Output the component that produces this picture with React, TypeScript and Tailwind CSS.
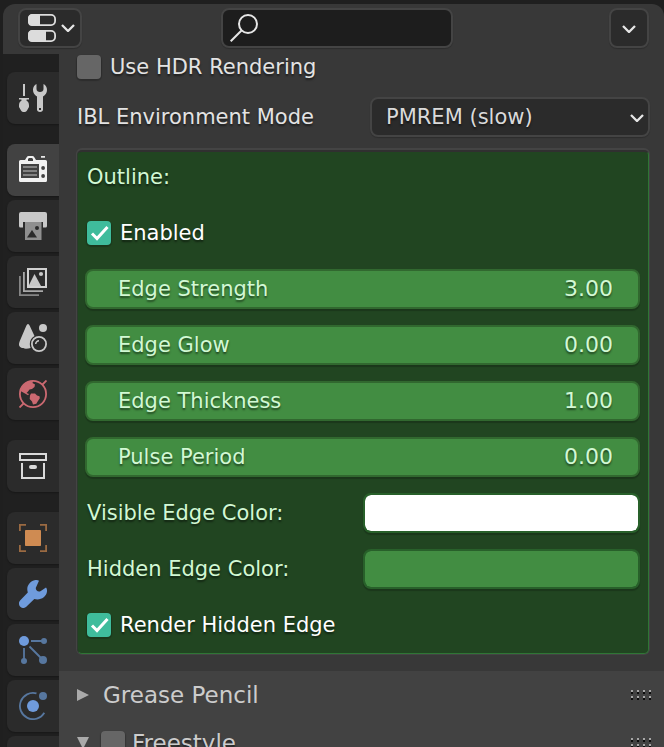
import React, { ReactNode, useState } from "react";

function Icon({ children }: { children: ReactNode }) {
  return (
    <svg viewBox="0 0 28 28" className="size-7 shrink-0" fill="none" aria-hidden="true">
      {children}
    </svg>
  );
}

function Chevron() {
  return (
    <svg viewBox="0 0 14 8" className="h-2 w-3.5 shrink-0" fill="none" stroke="#e6e6e6" strokeWidth="2.300" aria-hidden="true">
      <path d="M1 1 7 7 13 1" />
    </svg>
  );
}

const ToolIcon = (
  <Icon>
    <path fill="#c8c8c8" d="M4 0h2v12H4zM0 14h10v1.6H7.6V17H8c1.400.9 2 2.600 2 4.500V23l-2 3.500C7.300 27.700 6.200 28 5 28s-2.300-.3-3-1.500L0 23v-1.500C0 19.600.6 17.900 2 17h.4v-1.400H0z" />
    <path fill="#c8c8c8" fillRule="evenodd" d="M17.500 0v5c0 2 1.500 3 3.500 3s3.500-1 3.500-3V0C26.800 1.200 28 3.300 28 6c0 3-1.500 5-4 6.500V25.500c0 1.500-1.200 2.500-3 2.500s-3-1-3-2.500V12.500C15.500 11 14 9 14 6c0-2.700 1.200-4.800 3.500-6zM20 24v2h2v-2z" />
  </Icon>
);

const RenderIcon = (
  <Icon>
    <path fill="#f2f2f2" fillRule="evenodd" d="M1.500 4H6l2-3.200Q8.500 0 9.500 0h4q1 0 1.500.8L17 4h9.500Q28 4 28 5.500v19Q28 26 26.500 26h-25Q0 26 0 24.500v-19Q0 4 1.500 4zM9 3v2h5V3l-1-1h-3zM2 8v14h18V8zM22.200 12a1.900 1.900 0 1 0 3.800 0a1.900 1.900 0 1 0-3.800 0M22.200 20a1.900 1.900 0 1 0 3.800 0a1.900 1.900 0 1 0-3.800 0" />
    <path stroke="#999" strokeWidth="1.400" d="M4 11h14M4 15h14M4 19h14" />
    <path stroke="#e6e6e6" strokeWidth="1.600" d="M22 .9h4" />
  </Icon>
);

const OutputIcon = (
  <Icon>
    <path fill="#c8c8c8" d="M2 0h24q2 0 2 2v12q0 1.500-1.500 1.500H24V8H4v7.500H1.500Q0 15.500 0 14V2Q0 0 2 0z" />
    <path fill="#c8c8c8" d="M4 7h20v3H4z" />
    <path fill="#8f8f8f" d="M6 10h16.500v18H6z" />
    <path fill="#2b2b2b" d="m8 25.500 5-7.500 5 7.500z" />
    <circle cx="18" cy="16" r="2" fill="#2b2b2b" />
  </Icon>
);

const ViewLayerIcon = (
  <Icon>
    <path stroke="#858585" strokeWidth="1.800" d="M.9 8v19.100H20" />
    <path stroke="#a8a8a8" strokeWidth="1.800" d="M4.900 4v19.100H24" />
    <rect x="9" y="1" width="18" height="18" stroke="#d0d0d0" strokeWidth="2" />
    <path fill="#c8c8c8" d="M10 18v-1l5.500-11L22 18z" />
    <circle cx="22" cy="6" r="2.100" fill="#c8c8c8" />
  </Icon>
);

const SceneIcon = (
  <Icon>
    <path fill="#c8c8c8" d="M9 0Q10 0 10.700 1.800L15.500 12C12.500 13.500 10.800 16.500 10.800 20q0 2 .8 4Q9.500 24.700 7 24.700C3 24.700 0 23 0 20.500c0-1.500.5-2.500 1-4L7.300 1.800Q8 0 9 0z" />
    <circle cx="24" cy="4" r="4" fill="#c8c8c8" />
    <circle cx="20" cy="20" r="7.100" stroke="#c8c8c8" strokeWidth="1.800" />
    <path stroke="#c8c8c8" strokeWidth="1.500" d="M16.700 20a3.300 3.300 0 0 1 3.300-3.300" />
  </Icon>
);

const WorldIcon = (
  <Icon>
    <circle cx="14" cy="14" r="13.100" stroke="#cb6971" strokeWidth="1.800" />
    <path stroke="#cb6971" strokeWidth="1.800" d="m23.500 4.500 4-4M.5 27.500l4-4" />
    <path fill="#cb6971" d="M4 5.500Q8 1 14 1l-.5 2 2.500 1.500-.5 2.500L13 9l-2.500.5L9 11.500l-1.500 1.500L10 14l-1 1.200-3-1.700L1.500 11Q2 8 4 5.500z" />
    <path fill="#cb6971" d="M12 13.500h4l2 2 2.500.8.300 2-2 3-1.500 2.500-3.300.8-1-3-2.300-2.600.3-3.500z" />
  </Icon>
);

const CollectionIcon = (
  <Icon>
    <rect x="1" y="2" width="26" height="6" stroke="#dadada" strokeWidth="2" />
    <path stroke="#dadada" strokeWidth="2" d="M3 11v15h22V11" />
    <rect x="10" y="13" width="8" height="4" rx="2" fill="#dadada" />
  </Icon>
);

const ObjectIcon = (
  <Icon>
    <path stroke="#9a6a42" strokeWidth="1.800" d="M.9 7V.9H7M21 .9h6.100V7M27.100 21v6.100H21M7 27.100H.9V21" />
    <rect x="6" y="6" width="16" height="16" rx=".8" fill="#cf8b52" />
  </Icon>
);

const ModifierIcon = (
  <Icon>
    <path fill="#6f9bdc" d="M20 .8C19 .1 17.500-.2 15.500.3 10 1.800 7 7 8.800 12.600L1.300 20.200C-.6 22.100-.4 24.700 1 26.500c1.700 2 4.500 2 6.300.3l8-7.800c6 1.700 12-1.800 12.700-7.500.2-1.500-.2-3.200-1-4L21.800 11c-3 1.800-6.300-1.500-4.500-4.300z" />
  </Icon>
);

const ParticlesIcon = (
  <Icon>
    <path stroke="#57779f" strokeWidth="1.800" d="M12 5h11M5 12v11M10.500 10.500 22 22" />
    <circle cx="5" cy="5" r="5" fill="#6f9bdc" />
    <circle cx="25" cy="5" r="3" fill="#57779f" />
    <circle cx="5" cy="25" r="3" fill="#57779f" />
    <circle cx="24" cy="24" r="4" fill="#57779f" />
  </Icon>
);

const PhysicsIcon = (
  <Icon>
    <path stroke="#57779f" strokeWidth="1.800" d="M17.500 1.400A13.100 13.100 0 1 0 25.300 20.700" />
    <circle cx="14" cy="14" r="6" fill="#6f9bdc" />
    <circle cx="24" cy="4" r="4" fill="#57779f" />
  </Icon>
);

const tabGroups: { name: string; icon: ReactNode }[][] = [
  [{ name: "Tool", icon: ToolIcon }],
  [
    { name: "Render", icon: RenderIcon },
    { name: "Output", icon: OutputIcon },
    { name: "View Layer", icon: ViewLayerIcon },
    { name: "Scene", icon: SceneIcon },
    { name: "World", icon: WorldIcon },
  ],
  [{ name: "Collection", icon: CollectionIcon }],
  [
    { name: "Object", icon: ObjectIcon },
    { name: "Modifiers", icon: ModifierIcon },
    { name: "Particles", icon: ParticlesIcon },
    { name: "Physics", icon: PhysicsIcon },
    { name: "Constraints", icon: null },
  ],
];

function Checkbox({ id, checked = false }: { id: string; checked?: boolean }) {
  return (
    <span className="relative size-6 shrink-0">
      <input
        id={id}
        type="checkbox"
        defaultChecked={checked}
        className="peer block size-6 appearance-none rounded bg-[#666666] shadow-[0_1px_1px_1px_rgba(0,0,0,0.2)] checked:bg-[#3fbc9c]"
      />
      <svg viewBox="0 0 24 24" className="pointer-events-none absolute inset-0 hidden peer-checked:block" fill="none" stroke="#fff" strokeWidth="3" aria-hidden="true">
        <path d="m5 12.500 5 5L20.500 6" />
      </svg>
    </span>
  );
}

function NumberField({ id, label, value }: { id: string; label: string; value: string }) {
  return (
    <div className="flex h-10 items-center rounded-lg border-2 border-[#31682f] bg-[#428d42] pr-[25px] pl-[31px] text-[#d2f8d4] shadow-[0_2px_1px_rgba(0,0,0,0.2)]">
      <label htmlFor={id} className="grow whitespace-nowrap">{label}</label>
      <input id={id} defaultValue={value} inputMode="decimal" className="w-24 bg-transparent text-right text-[22px] outline-none [text-shadow:inherit]" />
    </div>
  );
}

function ColorField({ id, label, value }: { id: string; label: string; value: string }) {
  return (
    <div className="flex h-10 items-center">
      <label htmlFor={id} className="w-1/2 pl-0.5 whitespace-nowrap">{label}</label>
      <input
        id={id}
        type="color"
        defaultValue={value}
        className="h-10 w-1/2 appearance-none rounded-lg border-2 border-[#28602a] bg-[#28602a] p-0 shadow-[0_2px_1px_rgba(0,0,0,0.2)] [&::-webkit-color-swatch]:rounded-md [&::-webkit-color-swatch]:border-0 [&::-webkit-color-swatch-wrapper]:p-0"
      />
    </div>
  );
}

function CheckRow({ id, label }: { id: string; label: string }) {
  return (
    <div className="flex h-10 items-center gap-[9px] pl-0.5 text-white">
      <Checkbox id={id} checked />
      <label htmlFor={id}>{label}</label>
    </div>
  );
}

function Grip() {
  const dots = [0, 6, 12, 18];
  return (
    <svg viewBox="0 0 21 10" className="ml-auto h-2.5 w-[21px] shrink-0" shapeRendering="crispEdges" aria-hidden="true">
      {dots.map((x) => (
        <g key={x}>
          <path fill="#a6a6a6" d={`M${x} 0h2v2h-2zM${x} 6h2v2h-2z`} />
          <path fill="#0c0c0c" d={`M${x} 2h2v2h-2zM${x} 8h2v2h-2z`} />
        </g>
      ))}
    </svg>
  );
}

export default function App() {
  const [active, setActive] = useState("Render");

  return (
    <div className="h-screen overflow-hidden bg-[#1f1f1f] pt-1 pl-[3px] font-['DejaVu_Sans',sans-serif] text-[21px] leading-7 text-[#e3e3e3] [text-shadow:0_2px_2px_rgba(0,0,0,0.5)]">
      <div className="flex h-full flex-col overflow-hidden rounded-t-xl bg-[#383838]">
        <header className="flex h-[50px] shrink-0 items-start px-[15px] pt-1">
          <button aria-label="Editor type" className="flex h-10 w-16 items-center justify-between rounded-lg border-2 border-[#444444] bg-[#2b2b2b] pr-[5px] pl-2 shadow-[0_1px_1px_rgba(0,0,0,0.2)]">
            <Icon>
              <rect x=".9" y=".9" width="26.200" height="10.200" rx="4" stroke="#dcdcdc" strokeWidth="1.800" />
              <path fill="#dcdcdc" d="M4.500 0H12v12H4.500Q0 12 0 7.500v-3Q0 0 4.500 0z" />
              <rect x=".9" y="16.900" width="26.200" height="10.200" rx="4" stroke="#dcdcdc" strokeWidth="1.800" />
              <path fill="#dcdcdc" d="M4.500 16H18v12H4.500Q0 28 0 23.500v-3Q0 16 4.500 16z" />
            </Icon>
            <Chevron />
          </button>
          <div className="flex-[16]" />
          <label className="flex h-10 w-[232px] items-center rounded-lg border-2 border-[#444444] bg-[#1d1d1d] pl-[7px] shadow-[0_1px_1px_rgba(0,0,0,0.2)]">
            <Icon>
              <circle cx="18" cy="10" r="9" stroke="#e6e6e6" strokeWidth="2" />
              <path stroke="#e6e6e6" strokeWidth="2" d="M11.500 16.500.7 27.300" />
            </Icon>
            <input type="search" aria-label="Search" className="ml-2 w-full min-w-0 bg-transparent outline-none" />
          </label>
          <div className="flex-[18]" />
          <button aria-label="Options" className="flex size-10 items-center justify-center rounded-lg border-2 border-[#444444] bg-[#2b2b2b] pt-0.5 shadow-[0_1px_1px_rgba(0,0,0,0.2)]">
            <Chevron />
          </button>
        </header>

        <div className="flex min-h-0 grow">
          <nav className="flex w-14 shrink-0 flex-col gap-5 overflow-hidden bg-[#202020] pt-[18px] pl-1">
            {tabGroups.map((group) => (
              <div key={group[0].name} className="flex shrink-0 flex-col gap-1">
                {group.map((tab) => (
                  <button
                    key={tab.name}
                    aria-label={tab.name}
                    aria-pressed={tab.name === active}
                    onClick={() => setActive(tab.name)}
                    className="flex h-[52px] items-center justify-center rounded-l-lg bg-[#2b2b2b] shadow-[0_1px_2px_rgba(0,0,0,0.3)] aria-pressed:bg-[#424242]"
                  >
                    {tab.icon}
                  </button>
                ))}
              </div>
            ))}
          </nav>

          <main className="flex min-w-0 grow flex-col overflow-hidden">
            <div className="shrink-0 pr-3.5 pb-4 pl-[17px]">
              <div className="flex h-[26px] items-center gap-[9px] pl-px">
                <Checkbox id="hdr" />
                <label htmlFor="hdr">Use HDR Rendering</label>
              </div>
              <div className="mt-[17px] flex h-10 items-center justify-between pl-px">
                <label htmlFor="ibl" className="whitespace-nowrap">IBL Environment Mode</label>
                <div className="relative w-[280px]">
                  <select id="ibl" className="block h-10 w-full appearance-none rounded-lg border-2 border-[#444444] bg-[#2b2b2b] pl-3.5 text-[#dadada] shadow-[0_1px_1px_rgba(0,0,0,0.2)] [text-shadow:inherit]">
                    <option>PMREM (slow)</option>
                  </select>
                  <span className="pointer-events-none absolute inset-y-0 right-[6px] flex items-center pt-0.5">
                    <Chevron />
                  </span>
                </div>
              </div>

              <section className="mt-[11px] rounded-md border border-t-2 border-[#444444] bg-[#444444]">
                <div className="flex flex-col gap-4 rounded-[5px] border border-t-2 border-t-[#303030] border-r-[#2f7535] border-b-[#2f7535] border-l-[#2c3a2d] bg-[#214521] pt-[5px] pr-2 pb-2 pl-[7px] text-[#d2f8d4]">
                  <h2 className="flex h-10 items-center pl-0.5">Outline:</h2>
                  <CheckRow id="enabled" label="Enabled" />
                  <NumberField id="strength" label="Edge Strength" value="3.00" />
                  <NumberField id="glow" label="Edge Glow" value="0.00" />
                  <NumberField id="thickness" label="Edge Thickness" value="1.00" />
                  <NumberField id="pulse" label="Pulse Period" value="0.00" />
                  <ColorField id="visible" label="Visible Edge Color:" value="#ffffff" />
                  <ColorField id="hidden" label="Hidden Edge Color:" value="#428d42" />
                  <CheckRow id="render-hidden" label="Render Hidden Edge" />
                </div>
              </section>
            </div>

            <div className="shrink-0 grow bg-[#424242] pr-3 pl-[18px] text-[23px] text-[#cccccc]">
              <div className="flex h-12 items-center">
                <button className="flex items-center gap-3.5">
                  <svg viewBox="0 0 12 12" className="size-3" fill="#aaaaaa" aria-hidden="true">
                    <path d="M0 0 12 6 0 12z" />
                  </svg>
                  Grease Pencil
                </button>
                <Grip />
              </div>
              <div className="flex h-12 items-center">
                <button aria-label="Toggle Freestyle panel" className="mr-3">
                  <svg viewBox="0 0 12 12" className="size-3" fill="#aaaaaa" aria-hidden="true">
                    <path d="M0 0h12L6 12z" />
                  </svg>
                </button>
                <Checkbox id="freestyle" />
                <label htmlFor="freestyle" className="ml-[7px]">Freestyle</label>
                <Grip />
              </div>
            </div>
          </main>
        </div>
      </div>
    </div>
  );
}
